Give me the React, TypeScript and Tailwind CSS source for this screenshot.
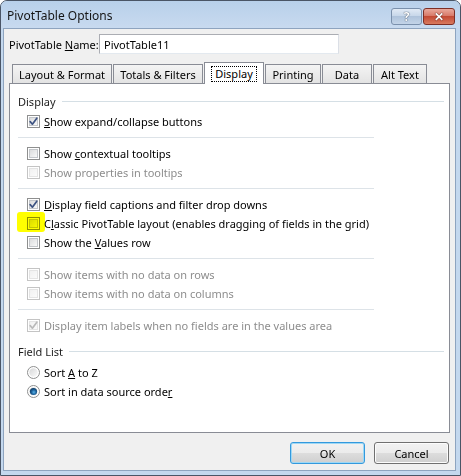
type CheckState = "on" | "off";

interface OptionRow {
    kind: "check" | "sep";
    label?: React.ReactNode;
    checked?: boolean;
    disabled?: boolean;
    highlight?: boolean;
}

const tabs = [
    { name: "Layout & Format", width: "w-[100px]" },
    { name: "Totals & Filters", width: "w-[90px]" },
    { name: "Display", width: "w-[60px]", active: true },
    { name: "Printing", width: "w-[56px]" },
    { name: "Data", width: "w-[50px]" },
    { name: "Alt Text", width: "w-[54px]" },
];

const rows: OptionRow[] = [
    { kind: "check", checked: true, label: <><u>S</u>how expand/collapse buttons</> },
    { kind: "sep" },
    { kind: "check", label: <>Show <u>c</u>ontextual tooltips</> },
    { kind: "check", disabled: true, label: "Show properties in tooltips" },
    { kind: "sep" },
    { kind: "check", checked: true, label: <><u>D</u>isplay field captions and filter drop downs</> },
    { kind: "check", highlight: true, label: <>C<u>l</u>assic PivotTable layout (enables dragging of fields in the grid)</> },
    { kind: "check", label: <>Show the <u>V</u>alues row</> },
    { kind: "sep" },
    { kind: "check", disabled: true, label: "Show items with no data on rows" },
    { kind: "check", disabled: true, label: "Show items with no data on columns" },
    { kind: "sep" },
    { kind: "check", disabled: true, checked: true, label: "Display item labels when no fields are in the values area" },
];

function CheckBox({ state, disabled }: { state: CheckState; disabled?: boolean }) {
    const edge = disabled ? "#c4c4c4" : "#8e8f8f";
    const tick = disabled ? "#b9b9b9" : "#3d5382";
    return (
        <svg width="13" height="13" viewBox="0 0 13 13" className="shrink-0">
            <defs>
                <linearGradient id={disabled ? "cbd" : "cbn"} x1="0" y1="0" x2="1" y2="1">
                    <stop offset="0" stopColor={disabled ? "#f0f0f0" : "#d9dadb"} />
                    <stop offset="1" stopColor={disabled ? "#fbfbfb" : "#fafafa"} />
                </linearGradient>
            </defs>
            <rect x="0.5" y="0.5" width="12" height="12" fill="#ffffff" stroke={edge} />
            <rect x="2.5" y="2.5" width="8" height="8" fill={`url(#${disabled ? "cbd" : "cbn"})`} stroke={disabled ? "#e4e4e4" : "#c3c6ca"} />
            {state === "on" && (
                <path d="M3.2 6.6 L5.4 9.2 L9.8 3.2" fill="none" stroke={tick} strokeWidth="1.7" strokeLinecap="round" strokeLinejoin="round" />
            )}
        </svg>
    );
}

function Radio({ selected }: { selected?: boolean }) {
    return (
        <svg width="13" height="13" viewBox="0 0 13 13" className="shrink-0">
            <defs>
                <linearGradient id="rdf" x1="0" y1="0" x2="1" y2="1">
                    <stop offset="0" stopColor="#d6d7d8" />
                    <stop offset="1" stopColor="#fbfbfb" />
                </linearGradient>
                <radialGradient id="rdot" cx="0.55" cy="0.6" r="0.6">
                    <stop offset="0" stopColor="#58b4ec" />
                    <stop offset="0.55" stopColor="#1c5f97" />
                    <stop offset="1" stopColor="#0d3a63" />
                </radialGradient>
            </defs>
            <circle cx="6.5" cy="6.5" r="6" fill="#ffffff" stroke="#8e8f8f" />
            <circle cx="6.5" cy="6.5" r="4.2" fill="url(#rdf)" />
            {selected && <circle cx="6.5" cy="6.5" r="3.6" fill="url(#rdot)" />}
        </svg>
    );
}

function GroupLabel({ text }: { text: React.ReactNode }) {
    return (
        <div className="flex items-center gap-[6px] pl-[8px] pr-[5px] h-[22px]">
            <span className="text-[#1e1e1e]">{text}</span>
            <div className="flex-1 h-px bg-[#d5dfe5]" />
        </div>
    );
}

export default function App() {
    return (
        <div className="w-[461px] h-[476px] bg-white font-['Noto_Sans',sans-serif] text-[11px] text-black leading-none">
            <div className="w-[461px] h-[476px] flex flex-col rounded-t-[7px] border border-[#4a5566] bg-[#c4d8ee]">
                {/* title bar */}
                <div className="h-[27px] flex items-start pl-[6px] pr-[5px] rounded-t-[6px] bg-[linear-gradient(#b8d0ea,#c8daef)]">
                    <span className="mt-[9px] text-[12px] text-[#151515]">PivotTable Options</span>
                    <div className="ml-auto mt-[7px] flex gap-px">
                        <div className="w-[31px] h-[17px] flex items-center justify-center rounded-[3px] border border-[#7a90ac] bg-[linear-gradient(#e1eaf5,#c5d5e8_50%,#afc3db_50%,#c3d4e8)] text-[12px] font-bold text-white [text-shadow:0_0_1px_#3b4a5e,0_0_1px_#3b4a5e]">
                            ?
                        </div>
                        <div className="w-[32px] h-[17px] flex items-center justify-center rounded-[3px] border border-[#7e2f25] bg-[linear-gradient(#e9a99c,#d77563_50%,#c34a34_50%,#d97a5e)] text-[12px] font-bold text-white [text-shadow:0_0_1px_#4a120b,0_0_1px_#4a120b]">
                            ✕
                        </div>
                    </div>
                </div>

                {/* dialog body */}
                <div className="flex-1 ml-[2px] mr-[4px] mb-[4px] border border-[#8ea4bf] bg-[#f0f0f0] flex flex-col pl-[5px] pr-[5px]">
                    <div className="mt-[5px] flex items-center h-[20px]">
                        <span className="w-[90px]">PivotTable <u>N</u>ame:</span>
                        <div className="w-[240px] h-[20px] flex items-center pl-[4px] bg-white border border-[#abadb3] border-b-[#e3e9ef] border-r-[#dbdfe6]">
                            PivotTable11
                        </div>
                    </div>

                    {/* tabs */}
                    <div className="mt-[8px] h-[21px] flex items-end gap-px pl-[3px]">
                        {tabs.map((t) =>
                            t.active ? (
                                <div key={t.name} className={`${t.width} h-[22px] -mb-px relative z-10 flex items-center justify-center bg-white border border-b-0 border-[#898c95]`}>
                                    <span className="h-[16px] px-[3px] flex items-center border border-dotted border-black">{t.name}</span>
                                </div>
                            ) : (
                                <div key={t.name} className={`${t.width} h-[19px] flex items-center justify-center border border-b-0 border-[#898c95] bg-[linear-gradient(#f4f4f4,#e3e3e3)]`}>
                                    {t.name}
                                </div>
                            )
                        )}
                    </div>

                    {/* tab panel */}
                    <div className="h-[350px] border border-[#898c95] bg-white flex flex-col pt-[6px]">
                        <GroupLabel text="Display" />
                        {rows.map((r, i) =>
                            r.kind === "sep" ? (
                                <div key={i} className="h-[13px] pt-[6px] pl-[8px]">
                                    <div className="w-[356px] h-px bg-[#dde3e8]" />
                                </div>
                            ) : (
                                <div key={i} className={`relative h-[19px] flex items-center gap-[4px] pl-[17px] ${r.disabled ? "text-[#8d8d8d]" : ""}`}>
                                    <CheckBox state={r.checked ? "on" : "off"} disabled={r.disabled} />
                                    <span>{r.label}</span>
                                    {r.highlight && (
                                        <div className="absolute left-[7px] top-[-2px] w-[28px] h-[20px] rounded-[3px] bg-[#ffff00] mix-blend-multiply" />
                                    )}
                                </div>
                            )
                        )}
                        <div className="mt-[5px] h-[23px] flex flex-col justify-center">
                            <GroupLabel text="Field List" />
                        </div>
                        <div className="h-[19px] flex items-center gap-[4px] pl-[17px]">
                            <Radio />
                            <span>Sort <u>A</u> to Z</span>
                        </div>
                        <div className="h-[19px] flex items-center gap-[4px] pl-[17px]">
                            <Radio selected />
                            <span>Sort in data source orde<u>r</u></span>
                        </div>
                    </div>

                    {/* buttons */}
                    <div className="mt-[9px] flex justify-end gap-[9px] pr-px">
                        <button className="w-[75px] h-[22px] rounded-[3px] border border-[#3399dd] bg-[linear-gradient(#f2f2f2,#ebebeb_50%,#dddddd_50%,#cfcfcf)] shadow-[inset_0_0_0_1px_#9ed8f5]">
                            OK
                        </button>
                        <button className="w-[75px] h-[22px] rounded-[3px] border border-[#707070] bg-[linear-gradient(#f2f2f2,#ebebeb_50%,#dddddd_50%,#cfcfcf)] shadow-[inset_0_0_0_1px_#fcfcfc]">
                            Cancel
                        </button>
                    </div>
                </div>
            </div>
        </div>
    );
}
